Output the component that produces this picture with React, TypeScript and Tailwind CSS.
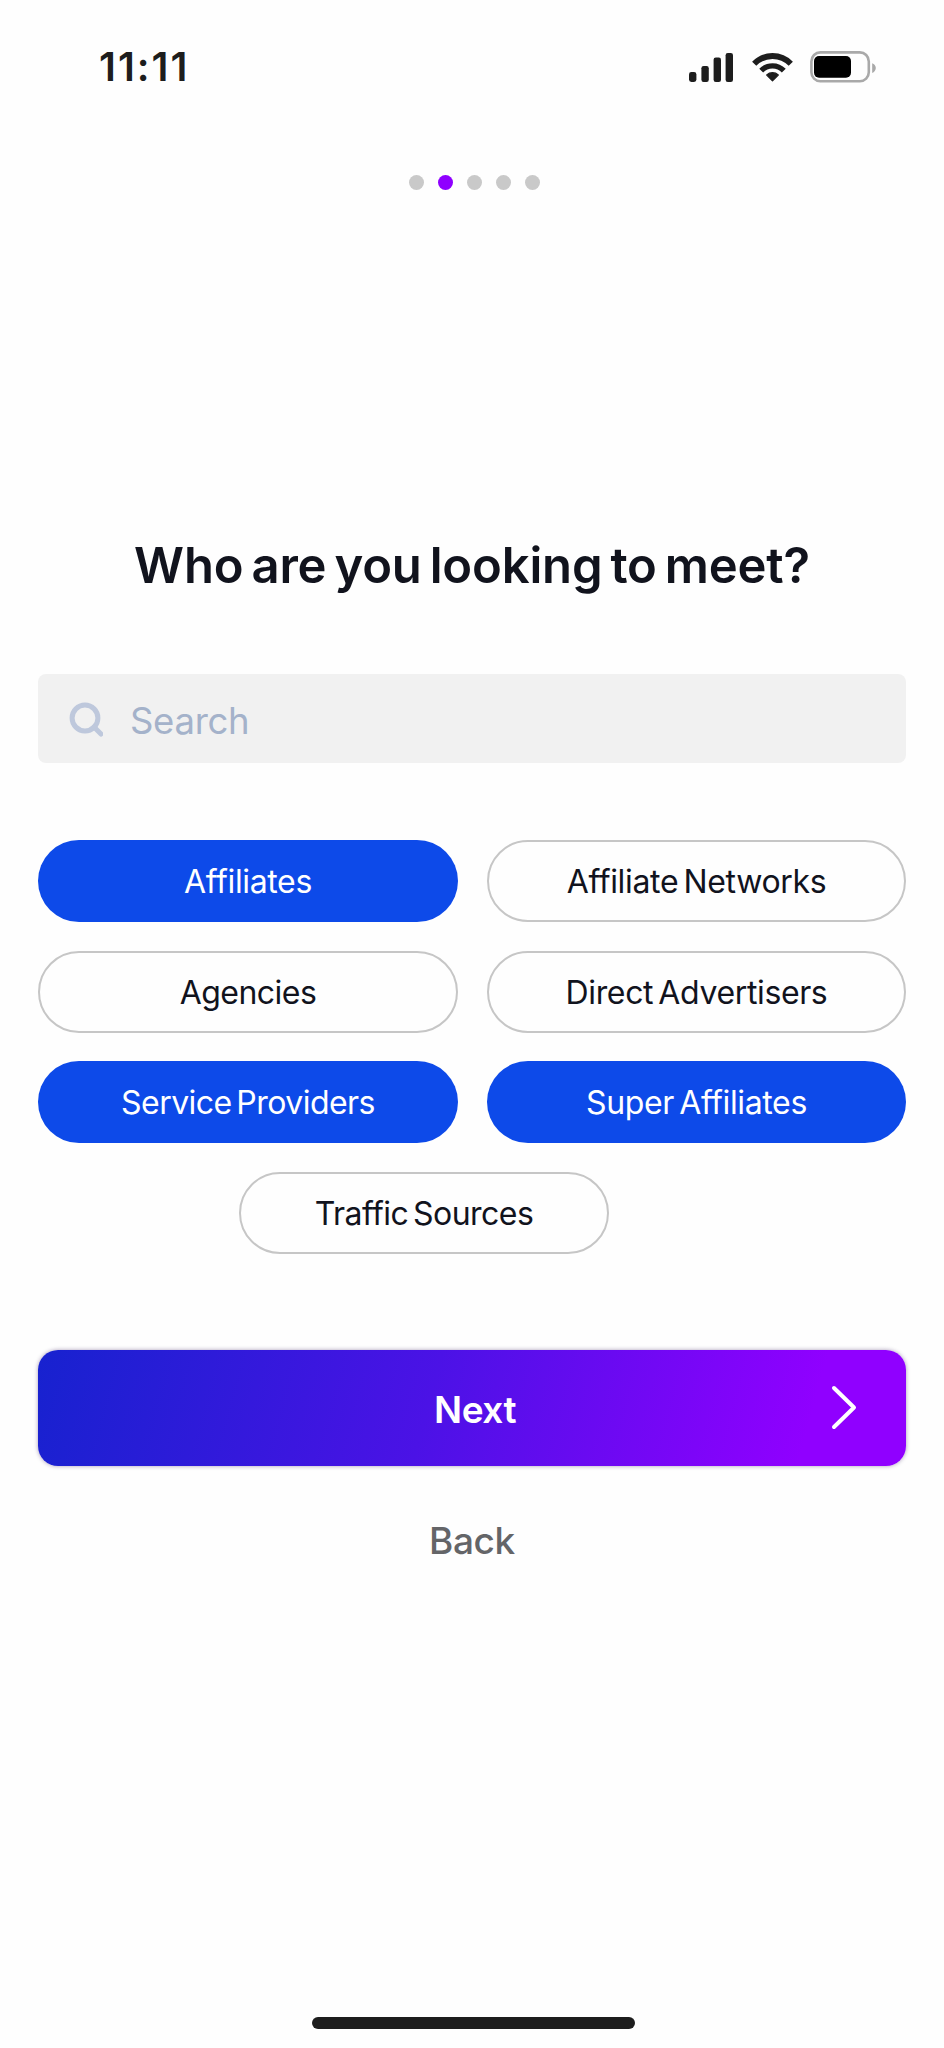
import { useState } from "react";

type Option = { label: string; className: string };

const OPTIONS: Option[] = [
  { label: "Affiliates", className: "w-[420px] tracking-[-0.36px]" },
  { label: "Affiliate Networks", className: "w-[419px] tracking-[-0.33px] [word-spacing:-3.4px]" },
  { label: "Agencies", className: "w-[420px] tracking-[-0.54px]" },
  { label: "Direct Advertisers", className: "w-[419px] tracking-[-0.37px] [word-spacing:-3.4px]" },
  { label: "Service Providers", className: "w-[420px] tracking-[-0.52px] [word-spacing:-4px]" },
  { label: "Super Affiliates", className: "w-[419px] tracking-[-0.37px] [word-spacing:-3.4px]" },
  { label: "Traffic Sources", className: "ml-[201px] w-[370px] tracking-[-0.54px] [word-spacing:-3.6px]" },
];

function SignalIcon() {
  return (
    <svg width="44" height="29" viewBox="0 0 44 29" fill="#1d1d1d">
      <rect x="0" y="19" width="7.4" height="10" rx="2.4" />
      <rect x="12.4" y="13" width="7.4" height="16" rx="2.2" />
      <rect x="24.6" y="4.5" width="7.4" height="24.5" rx="2.2" />
      <rect x="36.6" y="0" width="7.4" height="29" rx="2.2" />
    </svg>
  );
}

function WifiIcon() {
  return (
    <svg width="41" height="29" viewBox="0 0 41 29" fill="none" stroke="#1d1d1d">
      <path d="M2.2 10.8A25.4 25.4 0 0 1 38.8 10.8" strokeWidth="5.8" />
      <path d="M9.2 17.6A15.8 15.8 0 0 1 31.8 17.6" strokeWidth="5.4" />
      <path d="M20.5 27.9L14.7 22A8.4 8.4 0 0 1 26.3 22Z" fill="#1d1d1d" strokeWidth="1.2" strokeLinejoin="round" />
    </svg>
  );
}

function BatteryIcon() {
  return (
    <svg width="66" height="32" viewBox="0 0 66 32" fill="none">
      <rect x="1.4" y="1.4" width="57.4" height="28.8" rx="9" stroke="#a9a9a9" strokeWidth="2.6" />
      <rect x="4" y="5" width="37" height="21.8" rx="5" fill="#000" />
      <path d="M62.2 12.3C64.2 13 65.8 14.8 65.8 17S64.2 21.2 62.2 22Z" fill="#a9a9a9" />
    </svg>
  );
}

export default function App() {
  const [selected, setSelected] = useState(["Affiliates", "Service Providers", "Super Affiliates"]);
  const toggle = (label: string) =>
    setSelected((s) => (s.includes(label) ? s.filter((x) => x !== label) : [...s, label]));

  return (
    <div className="flex h-[2048px] w-[944px] flex-col bg-[#fefefe] font-['Inter','Liberation_Sans',sans-serif] text-[#11131d]">
      <header className="flex h-[134px] items-center pr-[68px] pl-[99px]">
        <time className="flex-1 text-[40px] leading-none font-semibold tracking-[2px] text-[#1d1d1d]">11:11</time>
        <div className="flex items-center">
          <SignalIcon />
          <span className="mr-[17px] ml-[19px]">
            <WifiIcon />
          </span>
          <BatteryIcon />
        </div>
      </header>

      <div className="mt-[41px] flex h-[15px] justify-center gap-[14px] pl-[4px]">
        {[0, 1, 2, 3, 4].map((i) => (
          <span key={i} className={`size-[15px] rounded-full ${i === 1 ? "bg-[#8f00ff]" : "bg-[#c9c9c9]"}`} />
        ))}
      </div>

      <main className="flex flex-col px-[38px]">
        <h1 className="mt-[346px] h-[60px] text-center text-[49px] leading-[60px] font-semibold tracking-[-0.16px] whitespace-nowrap [word-spacing:-4.2px]">
          Who are you looking to meet?
        </h1>

        <label className="mt-[78px] flex h-[89px] items-center rounded-lg bg-[#f1f1f1] pl-[31px]">
          <svg width="34" height="36" viewBox="0 0 34 36" fill="none" stroke="#bec8dc" strokeWidth="5">
            <circle cx="16" cy="17" r="12.9" />
            <path d="M25 26L32 33" strokeLinecap="round" />
          </svg>
          <input
            placeholder="Search"
            className="ml-[27px] h-[44px] flex-1 translate-y-[2px] bg-transparent text-[36.5px] leading-[44px] tracking-[-0.3px] outline-none placeholder:text-[#a4b2ca]"
          />
        </label>

        <div className="mt-[77px] flex flex-wrap gap-x-[29px] gap-y-[28.5px]">
          {OPTIONS.map(({ label, className }) => (
            <button
              key={label}
              onClick={() => toggle(label)}
              className={`h-[82px] rounded-full pt-[2px] text-[32px] leading-none whitespace-nowrap ${className} ${
                selected.includes(label) ? "bg-[#0d4ae9] text-white" : "border-2 border-[#c6c6c6]"
              }`}
            >
              {label}
            </button>
          ))}
        </div>

        <button className="mt-[96px] flex h-[116px] items-center rounded-[20px] bg-[linear-gradient(105deg,#1722cf_0%,#4b12e6_45%,#9000ff_88%)] pr-[49px] pl-[76px] text-white shadow-[0_0_4px_rgba(40,10,80,0.4)]">
          <span className="flex-1 translate-y-[2px] pl-[6px] text-center text-[37px] leading-none font-semibold tracking-[-0.5px]">Next</span>
          <svg width="27" height="46" viewBox="0 0 27 46" fill="none" stroke="#fff" strokeWidth="4" strokeLinecap="round" strokeLinejoin="round">
            <path d="M4 3L24 22.5L4 42" />
          </svg>
        </button>

        <button className="mt-[52px] h-[46px] text-center text-[37px] leading-[46px] font-medium tracking-[-0.4px] text-[#646568]">
          Back
        </button>
      </main>

      <div className="mt-auto mb-[19px] ml-[312px] h-[12px] w-[323px] rounded-full bg-[#1d1d1d]" />
    </div>
  );
}
